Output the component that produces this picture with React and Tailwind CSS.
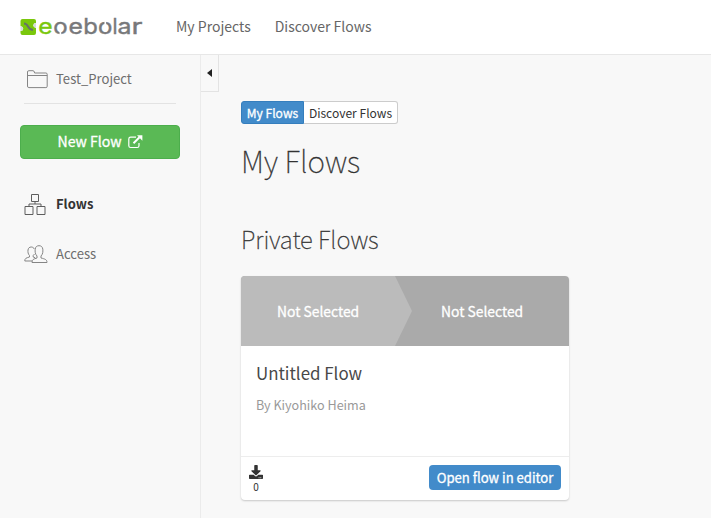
import { FaDownload } from "react-icons/fa";

const letters = [
  { c: "e", x: 18.2, w: 14.4, color: "#7ac70c" },
  { c: "o", x: 33.2, w: 14.4, color: "#77787a" },
  { c: "e", x: 48.6, w: 14.4, color: "#77787a" },
  { c: "b", x: 63.2, w: 14.6, color: "#77787a" },
  { c: "o", x: 78.1, w: 14.4, color: "#77787a" },
  { c: "l", x: 92.5, w: 5, color: "#77787a" },
  { c: "a", x: 97.6, w: 14, color: "#77787a" },
  { c: "r", x: 111.5, w: 11, color: "#77787a" },
];

function Logo() {
  return (
    <svg width="124" height="30" viewBox="0 -3 124 30" className="block overflow-visible">
      <path d="M2.500 4H14q2 0 2 2v2l-2 .5q-1.500 2 0 3.500l2 1v5q0 2-2 2H2.500q-2 0-2-2v-2l2-.5q1.500-2 0-3.500l-2-1V6q0-2 2-2z" fill="#7ac70c" />
      <path d="M.5 11l2 1q1.500 1.500 0 3.500l-2 .500zM16 8l-2 .5q-1.500 2 0 3.500l2 1z" fill="#d8dcdd" />
      <path d="M4 8.500q2.500 0 4 3t5 3.500" fill="none" stroke="#66716a" strokeWidth="2" />
      {letters.map((l, i) => (
        <text key={i} x={l.x} y="19" textLength={l.w} lengthAdjust="spacingAndGlyphs" fill={l.color} stroke={l.color} strokeWidth=".4" fontSize="22" fontWeight="400" fontFamily="Inter, sans-serif">
          {l.c}
        </text>
      ))}
      <path d="M40.400 16v4M85.300 6v4" stroke="#fff" strokeWidth="1.700" />
    </svg>
  );
}

function FolderIcon() {
  return (
    <svg width="22" height="19" viewBox="0 0 22 19" fill="none" stroke="#858585" className="block">
      <path d="M1.500 16V2Q1.500.700 2.800.700h4.200q1 0 1.300 1.300l.3 1h11.300q1.300 0 1.300 1.300V16.300q0 1.300-1.300 1.300H2.800Q1.500 17.600 1.500 16zM1.500 5.500h19.700" />
    </svg>
  );
}

function FlowsIcon() {
  return (
    <svg width="22" height="21" viewBox="0 0 22 21" fill="none" stroke="#5e5e5e" className="block">
      <path d="M7.500 .5h7v7h-7zM1 12.500h8v8h-8zM13 12.500h8v8h-8zM11 7.500v2.500M5 12.500V10h12v2.500" />
    </svg>
  );
}

function AccessIcon() {
  return (
    <svg width="24" height="19" viewBox="0 0 24 19" fill="none" stroke="#858585" className="block">
      <path d="M8 17.500C8 14.500 9.500 14 13 13V11C11 9 11 6.500 11.200 4.200 11.500 1.700 13 .7 15 .7s3.500 1 3.800 3.500C19 6.500 19 9 17 11v2c4 1 6 1.500 6 4.500z" />
      <path d="M8 16H.8c0-2.700 1.200-3 4.700-4v-1.500C4 9 3.800 7 4 5c.3-2 1.500-3 3.200-3 1.500 0 2.600.700 3 2M10.500 9l-1.300 1.500V12l2 .800" />
    </svg>
  );
}

function ExternalIcon() {
  return (
    <svg width="15" height="14" viewBox="0 0 15 14" fill="none" stroke="#fff" className="block">
      <path d="M8 2.200H2.700Q.8 2.200.8 4v6.700q0 1.800 1.900 1.800h6.500q1.800 0 1.800-1.800V8" strokeWidth="1.200" />
      <path d="M5.500 8.300 11.500 2.300" strokeWidth="2" />
      <path d="M9 .3h5.400v5.400z" fill="#fff" stroke="none" />
    </svg>
  );
}

export default function App() {
  return (
    <div className="flex h-[518px] w-[711px] flex-col overflow-hidden bg-[#f8f8f8] font-['Noto_Sans_CJK_JP','Noto_Sans',sans-serif] whitespace-nowrap text-[#333]">
      <header className="flex h-[55px] shrink-0 items-center border-b border-[#e7e7e7] bg-white pl-5">
        <div className="w-[156px]"><Logo /></div>
        <nav className="flex gap-6 pb-[2px] text-[14px] leading-5 text-[#666]">
          <a>My Projects</a>
          <a>Discover Flows</a>
        </nav>
      </header>
      <div className="flex grow">
        <aside className="w-[201px] shrink-0 border-r border-[#ebebeb] pl-5 text-[#6e6e6e]">
          <div className="ml-1 flex h-[49px] w-[152px] items-center border-b border-[#e3e3e3] pl-[2px] text-[13.100px]">
            <div className="w-[30px]"><FolderIcon /></div>
            Test_Project
          </div>
          <button className="mt-[21px] flex h-[34px] w-[160px] items-center justify-center gap-[6px] rounded border border-[#4cae4c] bg-[#5ab955] text-[14.100px] text-white [-webkit-text-stroke:0.3px_white]">
            New Flow <ExternalIcon />
          </button>
          <div className="mt-[34px] ml-1 flex h-[22px] items-center text-[13px] font-bold text-[#333]">
            <div className="w-8"><FlowsIcon /></div>
            Flows
          </div>
          <div className="mt-7 ml-1 flex h-[22px] items-center text-[13.100px]">
            <div className="w-8"><AccessIcon /></div>
            Access
          </div>
        </aside>
        <button className="flex h-[37px] w-[18px] shrink-0 items-center justify-center border-r border-b border-[#e3e3e3]">
          <svg width="5" height="8" viewBox="0 0 5 8"><path d="M5 0v8L0 4z" fill="#222" /></svg>
        </button>
        <main className="ml-[22px] w-[328px] pt-[46px]">
          <div className="flex h-[23px] w-[157px] rounded-[3px] text-[12.050px] leading-[21px]">
            <span className="w-[63px] rounded-l-[3px] border border-[#357ebd] bg-[#428bca] text-center text-white [-webkit-text-stroke:0.3px_white]">My Flows</span>
            <span className="grow rounded-r-[3px] border border-l-0 border-[#ccc] bg-white text-center">Discover Flows</span>
          </div>
          <h1 className="mt-[16px] text-[29.800px] leading-[40px] font-thin [-webkit-text-stroke:0.3px_#333]">My Flows</h1>
          <h2 className="mt-[42px] text-[23.900px] leading-[34px] font-thin [-webkit-text-stroke:0.3px_#333]">Private Flows</h2>
          <section className="mt-5 flex h-[224px] flex-col overflow-hidden rounded bg-white shadow-[0_1px_2px_rgba(0,0,0,0.200)]">
            <div className="flex h-[70px] shrink-0 bg-[#aaa] text-[13.850px] text-white [-webkit-text-stroke:0.3px_white]">
              <div className="flex w-[171px] items-center bg-[#bbb] pl-9 [clip-path:polygon(0_0,154px_0,171px_50%,154px_100%,0_100%)]">Not Selected</div>
              <div className="flex items-center pl-[29px]">Not Selected</div>
            </div>
            <div className="grow px-[15px] pt-[15px]">
              <h3 className="text-[16.900px] leading-6 text-[#484848]">Untitled Flow</h3>
              <p className="mt-[10px] text-[12.600px] leading-5 text-[#999]">By Kiyohiko Heima</p>
            </div>
            <div className="flex h-[44px] shrink-0 items-start justify-between border-t border-[#ededed] px-2">
              <div className="flex flex-col items-center pt-2 text-[10px] leading-3">
                <FaDownload size={14} color="#333" />
                <span className="mt-[2px]">0</span>
              </div>
              <button className="mt-2 flex h-[25px] w-[132px] items-center justify-center rounded bg-[#428bca] text-[13.100px] text-white [-webkit-text-stroke:0.3px_white]">Open flow in editor</button>
            </div>
          </section>
        </main>
      </div>
    </div>
  );
}
